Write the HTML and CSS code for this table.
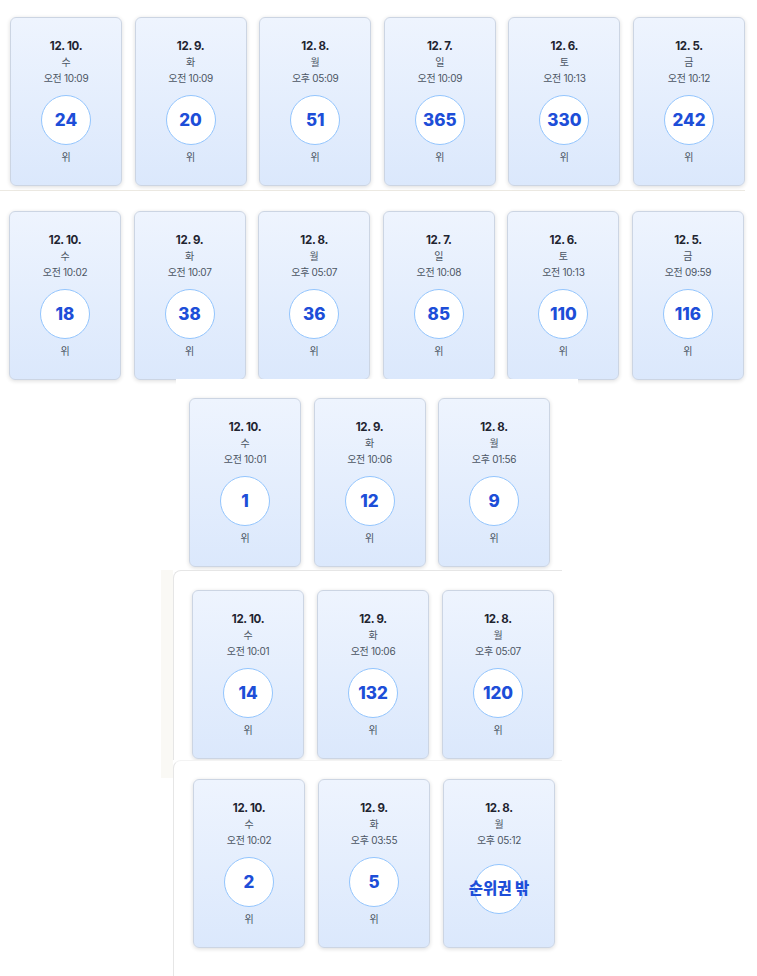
FILE: index.html
```html
<!DOCTYPE html>
<html lang="ko">
<head>
<meta charset="utf-8">
<link rel="stylesheet" href="styles.css">
</head>
<body>
<div class="shot shot-a">
  <div class="row">
    <div class="card"><div class="date">12. 10.</div><div class="day">수</div><div class="time">오전 10:09</div><div class="rank">24</div><div class="unit">위</div></div>
    <div class="card"><div class="date">12. 9.</div><div class="day">화</div><div class="time">오전 10:09</div><div class="rank">20</div><div class="unit">위</div></div>
    <div class="card"><div class="date">12. 8.</div><div class="day">월</div><div class="time">오후 05:09</div><div class="rank">51</div><div class="unit">위</div></div>
    <div class="card"><div class="date">12. 7.</div><div class="day">일</div><div class="time">오전 10:09</div><div class="rank">365</div><div class="unit">위</div></div>
    <div class="card"><div class="date">12. 6.</div><div class="day">토</div><div class="time">오전 10:13</div><div class="rank">330</div><div class="unit">위</div></div>
    <div class="card"><div class="date">12. 5.</div><div class="day">금</div><div class="time">오전 10:12</div><div class="rank">242</div><div class="unit">위</div></div>
  </div>
</div>
<div class="divider"></div>
<div class="shot shot-b">
  <div class="row">
    <div class="card"><div class="date">12. 10.</div><div class="day">수</div><div class="time">오전 10:02</div><div class="rank">18</div><div class="unit">위</div></div>
    <div class="card"><div class="date">12. 9.</div><div class="day">화</div><div class="time">오전 10:07</div><div class="rank">38</div><div class="unit">위</div></div>
    <div class="card"><div class="date">12. 8.</div><div class="day">월</div><div class="time">오후 05:07</div><div class="rank">36</div><div class="unit">위</div></div>
    <div class="card"><div class="date">12. 7.</div><div class="day">일</div><div class="time">오전 10:08</div><div class="rank">85</div><div class="unit">위</div></div>
    <div class="card"><div class="date">12. 6.</div><div class="day">토</div><div class="time">오전 10:13</div><div class="rank">110</div><div class="unit">위</div></div>
    <div class="card"><div class="date">12. 5.</div><div class="day">금</div><div class="time">오전 09:59</div><div class="rank">116</div><div class="unit">위</div></div>
  </div>
</div>
<div class="shot shot-c">
  <div class="row">
    <div class="card"><div class="date">12. 10.</div><div class="day">수</div><div class="time">오전 10:01</div><div class="rank">1</div><div class="unit">위</div></div>
    <div class="card"><div class="date">12. 9.</div><div class="day">화</div><div class="time">오전 10:06</div><div class="rank">12</div><div class="unit">위</div></div>
    <div class="card"><div class="date">12. 8.</div><div class="day">월</div><div class="time">오후 01:56</div><div class="rank">9</div><div class="unit">위</div></div>
  </div>
</div>
<div class="lower">
  <div class="panel panel-d">
    <div class="row">
      <div class="card"><div class="date">12. 10.</div><div class="day">수</div><div class="time">오전 10:01</div><div class="rank">14</div><div class="unit">위</div></div>
      <div class="card"><div class="date">12. 9.</div><div class="day">화</div><div class="time">오전 10:06</div><div class="rank">132</div><div class="unit">위</div></div>
      <div class="card"><div class="date">12. 8.</div><div class="day">월</div><div class="time">오후 05:07</div><div class="rank">120</div><div class="unit">위</div></div>
    </div>
  </div>
  <div class="panel panel-e">
    <div class="row">
      <div class="card"><div class="date">12. 10.</div><div class="day">수</div><div class="time">오전 10:02</div><div class="rank">2</div><div class="unit">위</div></div>
      <div class="card"><div class="date">12. 9.</div><div class="day">화</div><div class="time">오후 03:55</div><div class="rank">5</div><div class="unit">위</div></div>
      <div class="card"><div class="date">12. 8.</div><div class="day">월</div><div class="time">오후 05:12</div><div class="rank rank-out">순위권 밖</div></div>
    </div>
  </div>
</div>
</body>
</html>
```

FILE: styles.css
```css
* { box-sizing: border-box; }
html, body { margin: 0; padding: 0; background: #ffffff; }
body {
  font-family: "Inter", "Noto Sans CJK KR", sans-serif;
  color: #4b5563;
  width: 757px;
  height: 976px;
  overflow: hidden;
}
.row {
  display: flex;
  gap: 12.6px;
}
.card {
  width: 112px;
  height: 169px;
  flex: none;
  border: 1px solid #ccd5e3;
  border-radius: 6px;
  background: linear-gradient(to bottom, #eef4fe, #dbe8fc);
  box-shadow: 0 1px 4px rgba(0, 0, 0, 0.14);
  display: flex;
  flex-direction: column;
  align-items: center;
  padding-top: 21px;
}
.date {
  font-size: 11.5px;
  font-weight: 700;
  line-height: 15px;
  color: #1f2430;
  letter-spacing: -0.3px;
}
.day {
  font-size: 10px;
  line-height: 16px;
  color: #4b5563;
}
.time {
  font-size: 10px;
  line-height: 16px;
  color: #4b5563;
  letter-spacing: -0.3px;
}
.rank {
  margin-top: 9px;
  width: 50px;
  height: 50px;
  border-radius: 50%;
  border: 1px solid #93c5fd;
  background: #ffffff;
  display: flex;
  align-items: center;
  justify-content: center;
  font-size: 17px;
  font-weight: 800;
  color: #1d4ed8;
  white-space: nowrap;
}
.rank-out {
  margin-top: 16px;
  padding-bottom: 4px;
  font-size: 15.5px;
}
.unit {
  margin-top: 5px;
  font-size: 10px;
  line-height: 15px;
  color: #4b5563;
}
.shot-a {
  padding: 17px 0 0 10px;
  height: 190px;
}
.divider {
  width: 745px;
  height: 1px;
  background: #ece9e2;
}
.shot-b {
  padding: 20px 0 0 9px;
  height: 188px;
}
.shot-c {
  position: relative;
  margin-left: 176px;
  width: 402px;
  height: 191px;
  background: #ffffff;
  padding: 19px 0 0 13px;
}
.shot-c .row { gap: 12.5px; }
.lower {
  margin-left: 161px;
  padding-left: 12px;
  background: linear-gradient(#faf9f5, #faf9f5) no-repeat 0 0 / 12px 208px;
}
.panel {
  position: relative;
  width: 389px;
  background: #ffffff;
  border-top: 1px solid #e6e6e6;
  border-left: 1px solid #e6e6e6;
  border-top-left-radius: 8px;
}
.panel .row { gap: 13px; }
.panel-d {
  height: 190px;
  padding: 19px 0 0 18px;
}
.panel-e {
  height: 216px;
  padding: 18px 0 0 19px;
  border-top-color: #f3f3f3;
}
```
